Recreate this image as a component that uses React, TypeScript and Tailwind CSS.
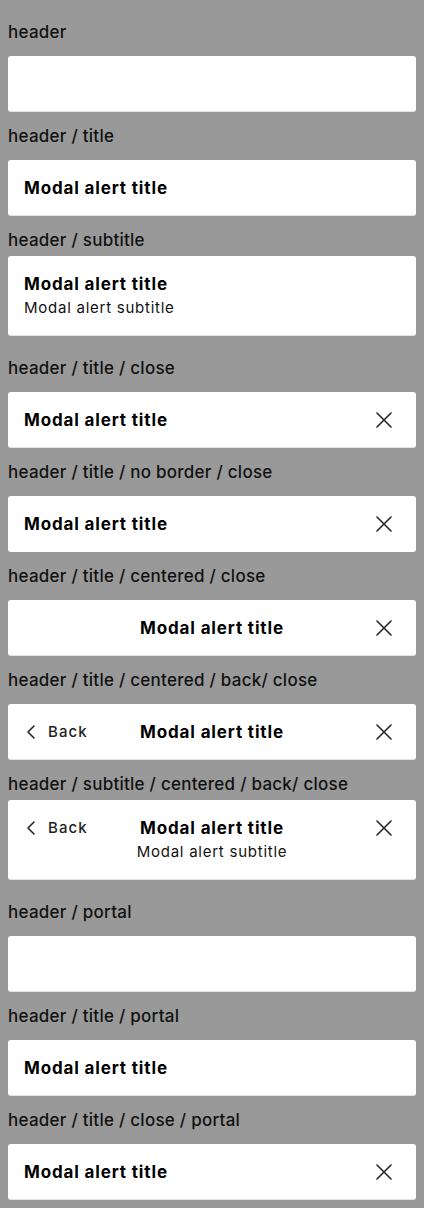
import React from 'react';

type Variant = {
  label: string;
  title?: string;
  subtitle?: string;
  close?: boolean;
  back?: boolean;
  centered?: boolean;
  border?: boolean;
};

const variants: Variant[] = [
  { label: 'header', border: true },
  { label: 'header / title', title: 'Modal alert title', border: true },
  { label: 'header / subtitle', title: 'Modal alert title', subtitle: 'Modal alert subtitle', border: true },
  { label: 'header / title / close', title: 'Modal alert title', close: true, border: true },
  { label: 'header / title / no border / close', title: 'Modal alert title', close: true },
  { label: 'header / title / centered / close', title: 'Modal alert title', close: true, centered: true, border: true },
  { label: 'header / title / centered / back/ close', title: 'Modal alert title', close: true, centered: true, back: true, border: true },
  {
    label: 'header / subtitle / centered / back/ close',
    title: 'Modal alert title',
    subtitle: 'Modal alert subtitle',
    close: true,
    centered: true,
    back: true,
    border: true,
  },
  { label: 'header / portal', border: true },
  { label: 'header / title / portal', title: 'Modal alert title', border: true },
  { label: 'header / title / close / portal', title: 'Modal alert title', close: true, border: true },
];

function CloseIcon() {
  return (
    <svg width="16" height="16" viewBox="0 0 16 16" fill="none" stroke="#262626" strokeWidth="1.6" strokeLinecap="round">
      <path d="M1 1L15 15M15 1L1 15" />
    </svg>
  );
}

function BackIcon() {
  return (
    <svg width="10" height="14" viewBox="0 0 10 14" fill="none" stroke="#262626" strokeWidth="1.6" strokeLinecap="round" strokeLinejoin="round">
      <path d="M8 1L2 7L8 13" />
    </svg>
  );
}

function ModalHeader({ v }: { v: Variant }) {
  const tall = !!v.subtitle;
  return (
    <div
      className={`relative flex bg-white rounded-[3px] px-4 ${tall ? 'h-[80px] items-start pt-4' : 'h-[56px] items-center'} ${
        v.border ? 'border-b border-[#e2e2e2]' : ''
      }`}
    >
      {v.back && (
        <div className={`absolute left-[18px] flex items-center gap-3 h-6 ${tall ? 'top-4' : 'top-1/2 -translate-y-1/2'}`}>
          <BackIcon />
          <span className="text-[15px] font-medium tracking-[0.07em] text-[#222] leading-6">Back</span>
        </div>
      )}
      {v.title && (
        <div className={`flex-1 flex flex-col ${v.centered ? 'items-center' : 'items-start'}`}>
          <span className="text-[17px] font-bold tracking-[0.05em] leading-6 text-black">{v.title}</span>
          {v.subtitle && <span className="text-[15px] tracking-[0.05em] leading-6 text-[#111]">{v.subtitle}</span>}
        </div>
      )}
      {v.close && (
        <div className={`absolute right-6 flex items-center h-6 ${tall ? 'top-4' : 'top-1/2 -translate-y-1/2'}`}>
          <CloseIcon />
        </div>
      )}
    </div>
  );
}

export default function App() {
  return (
    <div className="min-h-[1208px] bg-[#999999] px-2 pt-2 pb-2" style={{ fontFamily: 'Inter, "Noto Sans", sans-serif' }}>
      {variants.map((v) => (
        <div key={v.label} className={v.subtitle ? 'mb-2' : ''}>
          <div className={`pt-3 h-6 box-content text-[17px] font-medium tracking-[0.015em] leading-6 text-[#111] ${v.subtitle ? 'mb-1' : 'mb-3'}`}>
            {v.label}
          </div>
          <ModalHeader v={v} />
        </div>
      ))}
    </div>
  );
}
